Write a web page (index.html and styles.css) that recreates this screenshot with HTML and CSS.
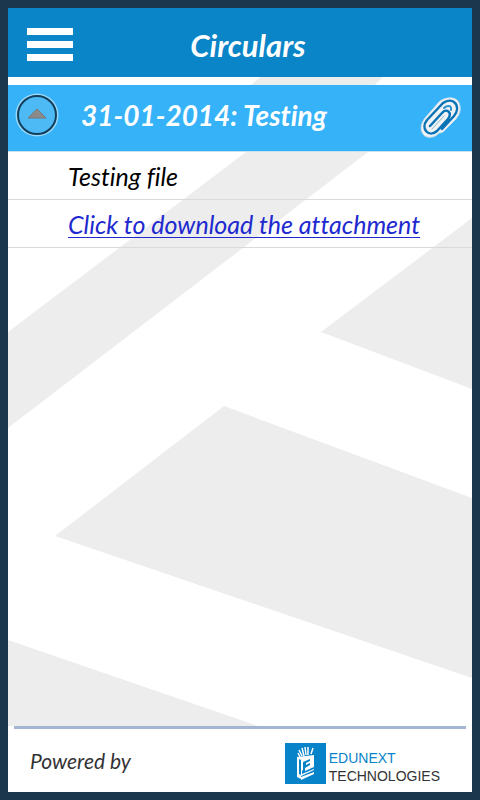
FILE: index.html
```html
<!DOCTYPE html>
<html lang="en">
<head>
  <meta charset="UTF-8" />
  <meta name="viewport" content="width=device-width, initial-scale=1.0"/>
  <title>Circulars</title>
  <link rel="stylesheet" href="styles.css">
</head>
<body>

  <header class="topbar">
    <button class="menu-btn" type="button" aria-label="Menu">
      <span class="bar"></span>
      <span class="bar"></span>
      <span class="bar"></span>
    </button>
    <h1>Circulars</h1>
  </header>

  <main class="content">
    <svg class="backdrop" viewBox="0 0 464 649" preserveAspectRatio="none" aria-hidden="true">
      <path d="M252 0H375L367 8H243Z"/>
      <path d="M238 75H360L0 351V255Z"/>
      <path d="M464 141V312L313 255Z"/>
      <path d="M216 329L464 421V601L47 459Z"/>
      <path d="M0 563L250 649H0Z"/>
    </svg>

    <section class="circular">
      <div class="circular-head">
        <button class="toggle" type="button" aria-label="Collapse">
          <svg width="44" height="44" viewBox="0 0 44 44">
            <circle cx="22" cy="22" r="21.5" fill="#9bd9fb"/>
            <circle cx="22" cy="22" r="19" fill="#4dbaf6" stroke="#123f5c" stroke-width="2"/>
            <path d="M13 25L22 16L31 25Z" fill="#8b8b8b" stroke="#777" stroke-width="1" stroke-linejoin="round"/>
          </svg>
        </button>
        <h2>31-01-2014: Testing</h2>
        <svg class="clip" width="42" height="42" viewBox="0 0 42 42" fill="none" stroke-linecap="round" stroke-linejoin="round" aria-hidden="true">
          <path d="M20 4C27-1 37 0 39 6C42 13 39 18 36 22L25 33C23 36 20 36 19 36C15 41 6 42 3 37C-1 31 2 25 5 21Z" fill="#f0f2f4" stroke="#c4dcea" stroke-width="1"/>
          <path d="M22 32L34 19C42 9 33-1 23 6L7 23C0 32 9 41 17 34L28 22C33 15 26 11 22 16L10 29" stroke="#0873b7" stroke-width="2.500"/>
          <path d="M24 11C27 8 32 8 31 13" stroke="#2c93cf" stroke-width="2"/>
          <path d="M12 32L24 19" stroke="#8fb9cc" stroke-width="1"/>
        </svg>
      </div>
      <p class="line">Testing file</p>
      <p class="line"><a href="#">Click to download the attachment</a></p>
    </section>
  </main>

  <footer class="footer">
    <span class="powered">Powered by</span>
    <div class="brand">
      <svg width="41" height="41" viewBox="0 0 41 41" aria-hidden="true">
        <path fill="#0783c9" d="M0 0H41V41H0Z"/>
        <path fill="#fff" d="M12 14L29 12V27L16 33V36L12 34Z"/>
        <path fill="#fff" d="M16 34L29 29V31L16 37Z"/>
        <path fill="#0783c9" d="M14 16L16 17V32L14 31ZM18 19L25 16V18L21 20V22L25 20V22L20 25V28L29 24V26L17 31V28L18 27Z"/>
        <path stroke="#fff" stroke-width="1.500" d="M15 14L13 10M17 13L14 7M19 13L17 5M21 12L20 4M23 12L23 4M26 11L28 5"/>
      </svg>
      <div class="brand-name">
        <span class="edunext">EDUNEXT</span>
        <span>TECHNOLOGIES</span>
      </div>
    </div>
  </footer>

</body>
</html>
```

FILE: styles.css
```css
* { box-sizing: border-box; }
body {
  margin: 0;
  min-height: 100vh;
  display: flex;
  flex-direction: column;
  border: 8px solid #1b374e;
  background: white;
  color: black;
  font-family: Lato, sans-serif;
  font-style: italic;
  font-variant-ligatures: none;
}
h1, h2, p { margin: 0; }
button {
  padding: 0;
  border: none;
  background: none;
  cursor: pointer;
}
svg { display: block; }

.topbar {
  display: grid;
  grid-template-columns: 48px 1fr 32px;
  align-items: center;
  height: 69px;
  padding: 4px 18px 0;
  background: #0a85c7;
  color: white;
}
.topbar h1 {
  font-size: 31px;
  line-height: 32px;
  text-align: center;
}
.menu-btn {
  display: flex;
  flex-direction: column;
  gap: 6px;
  padding: 0 1px;
}
.bar {
  height: 7px;
  background: white;
}

.content {
  flex: 1;
  position: relative;
  padding-top: 8px;
}
.backdrop {
  position: absolute;
  inset: 0;
  width: 100%;
  height: 100%;
  fill: #ededed;
}
.circular { position: relative; }
.circular-head {
  display: flex;
  align-items: center;
  height: 67px;
  padding: 0 10px 6px 7px;
  background: #35b2f8;
  border-bottom: 1px solid #c8e0ec;
  color: white;
}
.circular-head h2 {
  flex: 1;
  padding-left: 22px;
  font-size: 28px;
  line-height: 32px;
}
.clip { margin-top: 6px; }
.line {
  padding: 8px 16px 7px 60px;
  border-bottom: 1px solid #dadada;
  font-size: 25px;
  line-height: 32px;
}
.line a {
  color: #2029cf;
  text-decoration-thickness: 1px;
  text-underline-offset: 3px;
}

.footer {
  display: flex;
  align-items: flex-start;
  justify-content: space-between;
  height: 66px;
  margin: 0 6px;
  padding: 14px 26px 0 16px;
  border-top: 3px solid #a4b4d2;
}
.powered {
  padding-top: 6px;
  color: #333;
  font-size: 21px;
  line-height: 24px;
}
.brand {
  display: flex;
  gap: 3px;
}
.brand-name {
  display: flex;
  flex-direction: column;
  padding-top: 6px;
  color: #333;
  font: 14px/18px "Liberation Sans", Arial, sans-serif;
}
.edunext { color: #0783c9; }
```
